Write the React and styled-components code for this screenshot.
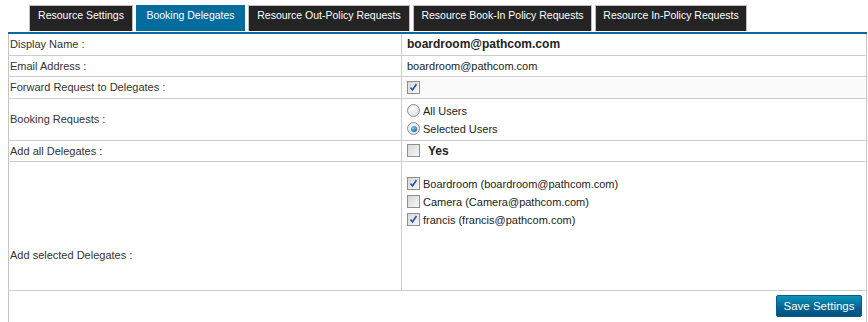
import React, { useState } from "react";
import styled, { createGlobalStyle } from "styled-components";

const GlobalStyle = createGlobalStyle`
  html, body {
    margin: 0;
    padding: 0;
    background: #ffffff;
    font-family: "Liberation Sans", Arial, sans-serif;
  }
`;

const Page = styled.div`
  width: 868px;
  height: 322px;
  overflow: hidden;
  padding-top: 5px;
  box-sizing: border-box;
`;

const TabBar = styled.div`
  display: flex;
  gap: 3px;
  padding-left: 29px;
  height: 27px;
`;

const Tab = styled.div`
  width: ${({ $w }) => $w}px;
  height: 26px;
  box-sizing: border-box;
  display: flex;
  justify-content: center;
  padding-top: 3px;
  font-size: 10.5px;
  color: #ffffff;
  background: ${({ $active }) => ($active ? "#006b9d" : "#242424")};
  border: 1px solid ${({ $active }) => ($active ? "#0a6b98" : "#c8bcc4")};
  border-bottom: none;
  white-space: nowrap;
`;

const Panel = styled.div`
  margin-left: 8px;
  width: 859px;
  border-top: 2px solid #0a68a0;
`;

const Table = styled.table`
  width: 100%;
  border-collapse: collapse;
  border-left: 1px solid #c4c4c4;
  border-right: 1px solid #c4c4c4;
`;

const Row = styled.tr`
  height: ${({ $h }) => $h}px;
  border-bottom: 1px solid #cccccc;
`;

const Label = styled.td`
  width: 391px;
  padding: ${({ $top }) => $top || 0}px 0 0 1px;
  font-size: 11px;
  color: #333333;
  border-right: 1px solid #cccccc;
  vertical-align: ${({ $top }) => ($top ? "top" : "middle")};
`;

const Value = styled.td`
  padding: ${({ $top }) => $top || 0}px 0 0 5px;
  font-size: ${({ $bold }) => ($bold ? "12px" : "11px")};
  font-weight: ${({ $bold }) => ($bold ? "bold" : "normal")};
  color: #222222;
  vertical-align: ${({ $top }) => ($top ? "top" : "middle")};
  background: ${({ $shade }) => ($shade ? "#fbfbfb" : "transparent")};
`;

const FooterCell = styled.td`
  padding: 4px 4px 0 0;
  height: 33px;
  text-align: right;
  vertical-align: top;
`;

const Option = styled.label`
  display: flex;
  align-items: center;
  gap: 3px;
  height: ${({ $h }) => $h || 18}px;
  font-size: 11px;
  color: #222222;
  cursor: pointer;
`;

const YesText = styled.span`
  font-size: 12px;
  font-weight: bold;
  margin-left: 5px;
  color: #222222;
`;

const Box = styled.span`
  width: 11px;
  height: 11px;
  flex: 0 0 auto;
  border: 1px solid #8f8f8f;
  background: linear-gradient(135deg, #d8d8d8 0%, #f6f6f6 100%);
  display: inline-flex;
  align-items: center;
  justify-content: center;
`;

const Radio = styled.span`
  width: 11px;
  height: 11px;
  flex: 0 0 auto;
  border-radius: 50%;
  border: 1px solid #8e8e8e;
  background: radial-gradient(circle at 40% 35%, #ffffff 0%, #e2e2e2 70%, #cfcfcf 100%);
  display: inline-flex;
  align-items: center;
  justify-content: center;
`;

const Dot = styled.span`
  width: 6px;
  height: 6px;
  border-radius: 50%;
  background: radial-gradient(circle at 40% 35%, #7fd0ff 0%, #1e7fc0 60%, #0c4f87 100%);
`;

const SaveButton = styled.button`
  font-family: "Liberation Sans", Arial, sans-serif;
  font-size: 11.5px;
  color: #ffffff;
  padding: 0;
  height: 22px;
  width: 86px;
  white-space: nowrap;
  border: 1px solid #0a5d86;
  border-radius: 2px;
  background: linear-gradient(#0c93b9, #03638f 60%, #004f7f);
  cursor: pointer;
`;

const Check = ({ checked }) => (
  <Box>
    {checked && (
      <svg width="9" height="9" viewBox="0 0 9 9">
        <path d="M1.5 4.5 L3.5 7 L7.5 1" fill="none" stroke="#2c4fa8" strokeWidth="1.6" />
      </svg>
    )}
  </Box>
);

const tabs = [
  { label: "Resource Settings", w: 104 },
  { label: "Booking Delegates", w: 109, active: true },
  { label: "Resource Out-Policy Requests", w: 162 },
  { label: "Resource Book-In Policy Requests", w: 179 },
  { label: "Resource In-Policy Requests", w: 152 },
];

const delegates = [
  { name: "Boardroom (boardroom@pathcom.com)", checked: true },
  { name: "Camera (Camera@pathcom.com)", checked: false },
  { name: "francis (francis@pathcom.com)", checked: true },
];

export default function App() {
  const [mode, setMode] = useState("selected");

  return (
    <Page>
      <GlobalStyle />
      <TabBar>
        {tabs.map((t) => (
          <Tab key={t.label} $active={t.active} $w={t.w}>
            {t.label}
          </Tab>
        ))}
      </TabBar>
      <Panel>
        <Table>
          <tbody>
            <Row $h={21}>
              <Label>Display Name :</Label>
              <Value $bold>boardroom@pathcom.com</Value>
            </Row>
            <Row $h={21}>
              <Label>Email Address :</Label>
              <Value>boardroom@pathcom.com</Value>
            </Row>
            <Row $h={22}>
              <Label>Forward Request to Delegates :</Label>
              <Value $shade>
                <Option>
                  <Check checked />
                </Option>
              </Value>
            </Row>
            <Row $h={42}>
              <Label>Booking Requests :</Label>
              <Value $top={3}>
                <Option onClick={() => setMode("all")}>
                  <Radio>{mode === "all" && <Dot />}</Radio>
                  All Users
                </Option>
                <Option onClick={() => setMode("selected")}>
                  <Radio>{mode === "selected" && <Dot />}</Radio>
                  Selected Users
                </Option>
              </Value>
            </Row>
            <Row $h={21}>
              <Label>Add all Delegates :</Label>
              <Value>
                <Option>
                  <Check />
                  <YesText>Yes</YesText>
                </Option>
              </Value>
            </Row>
            <Row $h={129}>
              <Label $top={87}>Add selected Delegates :</Label>
              <Value $top={13}>
                {delegates.map((d) => (
                  <Option key={d.name}>
                    <Check checked={d.checked} />
                    {d.name}
                  </Option>
                ))}
              </Value>
            </Row>
            <tr>
              <FooterCell colSpan={2}>
                <SaveButton>Save Settings</SaveButton>
              </FooterCell>
            </tr>
          </tbody>
        </Table>
      </Panel>
    </Page>
  );
}
